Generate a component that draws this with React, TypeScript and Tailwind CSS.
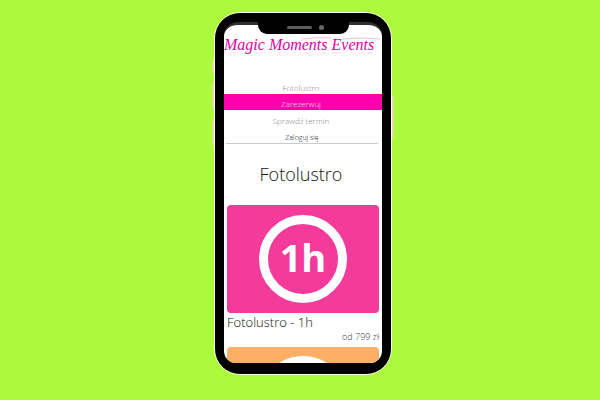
import React from "react";

function Logo() {
  return (
    <div className="relative h-[52px] overflow-hidden pt-2">
      <h1 className="whitespace-nowrap pr-2 text-center font-['Liberation_Serif',serif] text-base font-normal italic leading-6 text-[#e600a4]">
        Magic Moments Events
      </h1>
      <svg
        className="absolute inset-x-0 top-[11px] h-2 w-full"
        viewBox="0 0 158 8"
        fill="none"
        aria-hidden="true"
      >
        <path d="M78 3 Q94 1 107 2M118 3 Q137 1 156 3" stroke="#f08ccb" strokeWidth="0.6" />
      </svg>
    </div>
  );
}

function Nav() {
  return (
    <nav className="text-center text-[8px] leading-4 text-[#888]">
      <a href="#fotolustro" className="block pr-1 pt-[3px] leading-[13px]">
        Fotolustro
      </a>
      <a href="#rezerwacja" className="block bg-[#ff00ae] pr-1 pt-[3px] leading-[13px] text-[#ffe5f7]">
        Zarezerwuj
      </a>
      <a href="#termin" className="block pr-1 pt-[3px]">
        Sprawdź termin
      </a>
      <a
        href="#logowanie"
        className="ml-0.5 mr-1 block border-b border-[#ccc] pt-1 text-[7px] leading-[10px] text-[#111]"
      >
        Zaloguj się
      </a>
    </nav>
  );
}

function Badge({ label }: { label?: string }) {
  return (
    <div className="flex size-[88px] shrink-0 items-center justify-center rounded-full border-[9px] border-white pb-1 text-[38px] font-bold leading-none text-white">
      {label}
    </div>
  );
}

function Phone({ children }: { children: React.ReactNode }) {
  return (
    <div className="relative w-[178px]">
      <span className="absolute -left-0.5 top-12 h-[14px] w-0.5 rounded-l bg-[#dedca0]" />
      <span className="absolute -left-0.5 top-[70px] h-[27px] w-0.5 rounded-l bg-[#dedca0]" />
      <span className="absolute -left-0.5 top-[107px] h-[27px] w-0.5 rounded-l bg-[#dedca0]" />
      <span className="absolute -right-0.5 top-[84px] h-[42px] w-0.5 rounded-r bg-[#dedca0]" />
      <div className="rounded-[26px] border border-[#fbffe8] bg-black px-[9px] pb-[11px] pt-[9px]">
        <div className="h-[341px] overflow-hidden rounded-b-[12px] rounded-t-[14px] border-t-[3px] border-[#303030] bg-white">
          {children}
        </div>
      </div>
      <div className="absolute left-11 top-2 flex h-[14px] w-[91px] items-center justify-center gap-[7px] rounded-b-[9px] bg-black pl-1">
        <span className="h-[3px] w-[25px] rounded-full bg-[#5c5c5c]" />
        <span className="size-[5px] rounded-full bg-[#666]" />
      </div>
    </div>
  );
}

export default function App() {
  return (
    <div className="flex min-h-screen items-start justify-center bg-[#adfa3d] pl-1.5 pt-3 font-['Open_Sans',sans-serif] font-light">
      <Phone>
        <Logo />
        <div className="pt-px">
          <Nav />
        </div>
        <h2 className="pb-[18px] pr-1 pt-[18px] text-center text-lg leading-[25px] text-[#111]">
          Fotolustro
        </h2>
        <div className="px-[3px]">
          <article>
            <div className="flex justify-center rounded bg-[#f43b9c] py-[10px]">
              <Badge label="1h" />
            </div>
            <h3 className="text-[13px] leading-[18px] text-[#111]">Fotolustro - 1h</h3>
            <p className="pb-1 text-right text-[9px] leading-3 text-[#444]">od 799 zł</p>
          </article>
          <article className="flex justify-center rounded bg-[#ffae66] pt-[9px]">
            <Badge />
          </article>
        </div>
      </Phone>
    </div>
  );
}
